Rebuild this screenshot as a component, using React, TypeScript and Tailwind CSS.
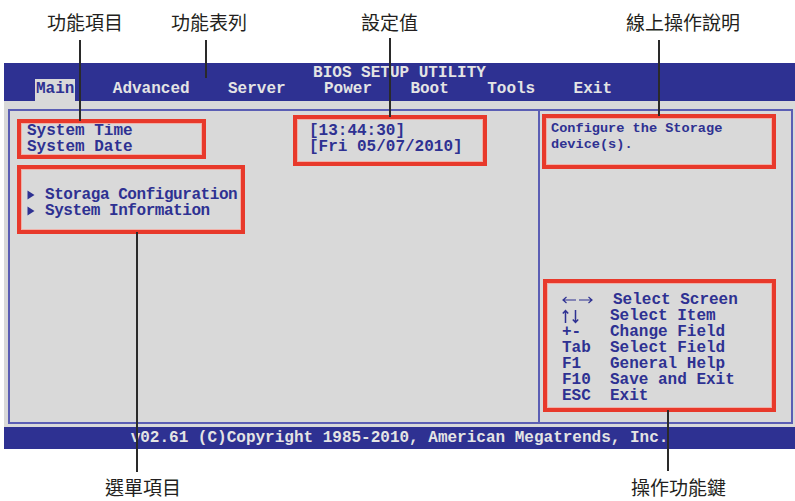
import React from "react";

const BLUE = "bg-[#2e3192]";

function Box({ x, y, w, h }: { x: number; y: number; w: number; h: number }) {
  return (
    <div
      className="absolute border-[4px] border-[#e8392b] shadow-[inset_0_0_0_1px_#f0b0a8]"
      style={{ left: x, top: y, width: w, height: h }}
    />
  );
}

function VLine({ x, y1, y2 }: { x: number; y1: number; y2: number }) {
  return (
    <div
      className="absolute w-[1.3px] bg-[#2a2a2a]"
      style={{ left: x - 0.6, top: y1, height: y2 - y1 }}
    />
  );
}

function Label({ x, y, text }: { x: number; y: number; text: string }) {
  return (
    <div
      className="absolute whitespace-nowrap text-[19px] leading-[19px] font-normal text-[#231f20] font-['Noto_Sans_CJK_TC','Noto_Sans_CJK_SC',sans-serif]"
      style={{ left: x, top: y }}
    >
      {text}
    </div>
  );
}

function Tri() {
  return (
    <svg width="8" height="10" viewBox="0 0 8 10" className="mt-[3px]">
      <path d="M0.5 0.5 L7.5 5 L0.5 9.5 Z" fill="#2e3192" />
    </svg>
  );
}

function LRArrows() {
  return (
    <svg width="32" height="10" viewBox="0 0 32 10" className="mt-[3px]">
      <g stroke="#2e3192" strokeWidth="1.2" fill="none">
        <path d="M1 5 L14 5 M4.5 2 L1 5 L4.5 8" />
        <path d="M17 5 L30 5 M26.5 2 L30 5 L26.5 8" />
      </g>
    </svg>
  );
}

function UDArrows() {
  return (
    <svg width="18" height="15" viewBox="0 0 18 15" className="mt-[1px]">
      <g stroke="#2e3192" strokeWidth="1.5" fill="none">
        <path d="M3.5 1.5 L3.5 14 M0.8 4.5 L3.5 1.5 L6.2 4.5" />
        <path d="M13.5 1 L13.5 13.5 M10.8 10.5 L13.5 13.5 L16.2 10.5" />
      </g>
    </svg>
  );
}

export default function App() {
  const keys: [React.ReactNode, string, string?][] = [
    [<LRArrows />, "Select Screen", "ml-[3px]"],
    [<UDArrows />, "Select Item"],
    ["+-", "Change Field"],
    ["Tab", "Select Field"],
    ["F1", "General Help"],
    ["F10", "Save and Exit"],
    ["ESC", "Exit"],
  ];
  const menu = ["Advanced", "Server", "Power", "Boot", "Tools", "Exit"];

  return (
    <div className="relative w-[795px] h-[501px] bg-white overflow-hidden font-['Liberation_Mono',monospace] font-bold">
      <div className="h-[63px]" />
      {/* header */}
      <div className={`ml-[4px] ${BLUE} h-[38px] flex flex-col`}>
        <div className="pt-[3px] h-[16px] text-center text-[16px] leading-[15px] text-[#e4e4e4]">
          BIOS SETUP UTILITY
        </div>
        <div className="flex gap-[38.4px] pl-[31px] h-[22px] text-[16px] leading-[16px] text-[#e4e4e4]">
          <span className="bg-[#d9d9d9] text-[#2e3192] px-px -mr-px pt-[2px] h-[22px]">Main</span>
          {menu.map((m) => (
            <span key={m} className="pt-[2px]">{m}</span>
          ))}
        </div>
      </div>
      {/* body */}
      <div className="ml-[4px] bg-[#d9d9d9] h-[326px] pt-[8px] pl-[4px] pr-[2px] pb-[3px]">
        <div className="h-full border-2 border-[#5b5eb4] flex text-[#2e3192]">
          <div className="w-[530px] border-r-2 border-[#5b5eb4] pt-[12px] pl-[17px] text-[16px] leading-[16px]">
            <div className="flex">
              <div className="w-[282px]">System Time</div>
              <div>[13:44:30]</div>
            </div>
            <div className="flex">
              <div className="w-[282px]">System Date</div>
              <div>[Fri 05/07/2010]</div>
            </div>
            <div className="mt-[32px] flex flex-col tracking-[-0.45px]">
              <div className="flex">
                <div className="w-[18px]"><Tri /></div>
                <div>Storaga Configuration</div>
              </div>
              <div className="flex">
                <div className="w-[18px]"><Tri /></div>
                <div>System Information</div>
              </div>
            </div>
          </div>
          <div className="flex-1 flex flex-col justify-between">
            <div className="pt-[10px] pl-[11px] text-[13.6px] leading-[16px]">
              <div>Configure the Storage</div>
              <div>device(s).</div>
            </div>
            <div className="pl-[22px] pb-[18px] text-[16px] leading-[16px]">
              {keys.map(([k, d, extra], i) => (
                <div key={i} className="flex h-[16px]">
                  <div className="w-[48px] flex items-start">{k}</div>
                  <div className={extra ?? ""}>{d}</div>
                </div>
              ))}
            </div>
          </div>
        </div>
      </div>
      {/* footer */}
      <div className={`ml-[4px] ${BLUE} h-[22px] pt-[3px] text-center text-[16px] leading-[16px] text-[#e4e4e4]`}>
        v02.61 (C)Copyright 1985-2010, American Megatrends, Inc.
      </div>

      {/* annotations */}
      <Box x={17} y={119} w={189} h={40} />
      <Box x={17} y={165} w={228} h={69} />
      <Box x={293} y={115} w={194} h={51} />
      <Box x={542} y={114} w={234} h={55} />
      <Box x={543} y={279} w={233} h={133} />

      <VLine x={80} y1={40} y2={121} />
      <VLine x={206} y1={40} y2={78} />
      <VLine x={390} y1={38} y2={117} />
      <VLine x={659} y1={40} y2={116} />
      <VLine x={137} y1={232} y2={472} />
      <VLine x={668} y1={410} y2={471} />

      <Label x={47} y={12} text="功能項目" />
      <Label x={171} y={12} text="功能表列" />
      <Label x={361} y={12} text="設定值" />
      <Label x={626} y={12} text="線上操作說明" />
      <Label x={105} y={477} text="選單項目" />
      <Label x={631} y={477} text="操作功能鍵" />
    </div>
  );
}
